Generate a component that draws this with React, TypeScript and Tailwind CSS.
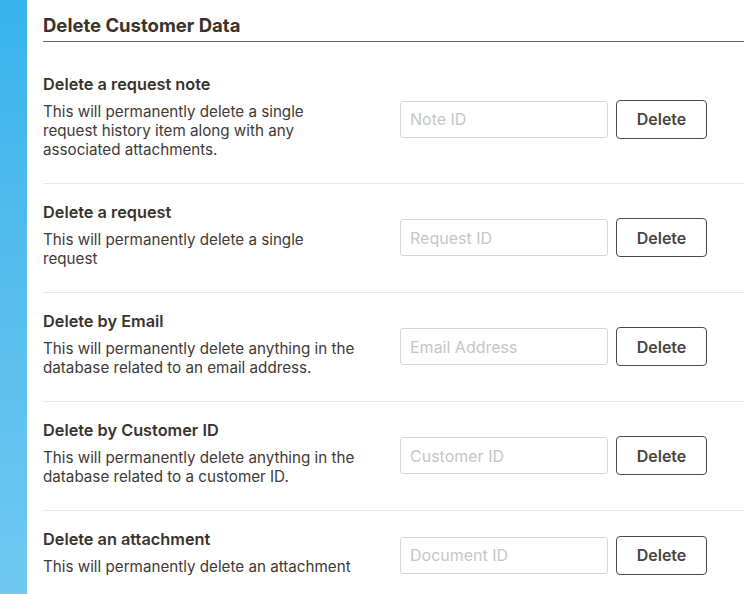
import React from "react";

const rows = [
  { t: "Delete a request note", d: "This will permanently delete a single request history item along with any associated attachments.", p: "Note ID" },
  { t: "Delete a request", d: "This will permanently delete a single request", p: "Request ID" },
  { t: "Delete by Email", d: "This will permanently delete anything in the database related to an email address.", p: "Email Address" },
  { t: "Delete by Customer ID", d: "This will permanently delete anything in the database related to a customer ID.", p: "Customer ID" },
  { t: "Delete an attachment", d: "This will permanently delete an attachment", p: "Document ID" },
];

export default function App() {
  return (
    <div className="flex w-[744px] h-[594px] overflow-hidden bg-white" style={{ fontFamily: "Inter, 'Liberation Sans', sans-serif" }}>
      <div className="w-[27px] shrink-0 bg-gradient-to-b from-[#38b3ec] to-[#70c8f1]" />
      <div className="flex-1 pl-[16px]">
        <div className="h-[42px] pt-[13px] border-b-[1.5px] border-[#6d655e]">
          <h1 className="text-[18.5px] font-bold text-[#3a332d] leading-[24px]">Delete Customer Data</h1>
        </div>
        {rows.map((r, i) => (
          <div key={i} className={`${i === 0 ? "h-[142px] pt-[31px]" : "h-[109px] pt-[17px]"} ${i < rows.length - 1 ? "border-b border-[#e8e8e8]" : ""}`}>
            <div className="grid grid-cols-[349px_208px_91px] gap-x-2 items-center">
              <div>
                <div className="text-[16.3px] font-semibold text-[#3a332d] leading-[22px]">{r.t}</div>
                <p className="mt-[7px] w-[318px] text-[15.2px] leading-[19px] text-[#3f3a36]">{r.d}</p>
              </div>
              <input placeholder={r.p} className="mt-[6px] h-[37px] rounded-[3px] border border-[#d6d6d6] px-[9px] text-[16px] placeholder:text-[#c6c6c6] outline-none" />
              <button className="mt-[6px] h-[39px] rounded-[4px] border border-[#4a4a4a] text-[16px] font-semibold text-[#4a4440]">Delete</button>
            </div>
          </div>
        ))}
      </div>
    </div>
  );
}
